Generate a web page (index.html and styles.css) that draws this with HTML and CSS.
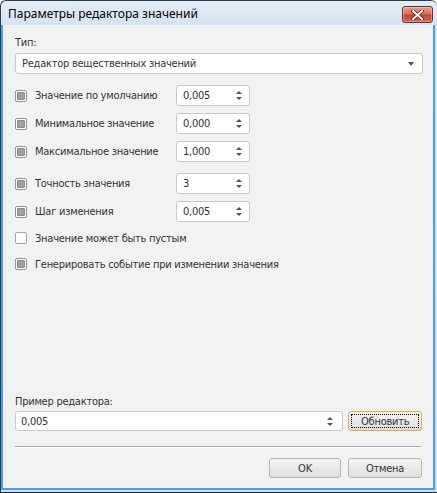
FILE: index.html
```html
<!DOCTYPE html>
<html lang="ru">
<head>
<meta charset="utf-8">
<title>Параметры редактора значений</title>
<link rel="stylesheet" href="styles.css">
</head>
<body>
<div class="window">
  <div class="titlebar">
    <span class="title">Параметры редактора значений</span>
    <span class="close">
      <svg width="13" height="10" viewBox="0 0 13 10"><path d="M2 1 L11 9 M11 1 L2 9" stroke="#5a2020" stroke-width="3.6" stroke-linecap="square"/><path d="M2 1 L11 9 M11 1 L2 9" stroke="#ffffff" stroke-width="2" stroke-linecap="square"/></svg>
    </span>
  </div>
  <div class="client">
    <div class="label type-label">Тип:</div>
    <div class="combo">
      <span>Редактор вещественных значений</span>
      <span class="combo-arrow"></span>
    </div>

    <div class="rows">
      <div class="row">
        <span class="check on"></span><span class="text">Значение по умолчанию</span>
        <div class="spin"><span>0,005</span><span class="arrows"><i class="up"></i><i class="down"></i></span></div>
      </div>
      <div class="row">
        <span class="check on"></span><span class="text">Минимальное значение</span>
        <div class="spin"><span>0,000</span><span class="arrows"><i class="up"></i><i class="down"></i></span></div>
      </div>
      <div class="row">
        <span class="check on"></span><span class="text">Максимальное значение</span>
        <div class="spin"><span>1,000</span><span class="arrows"><i class="up"></i><i class="down"></i></span></div>
      </div>
      <div class="row row-gap">
        <span class="check on"></span><span class="text">Точность значения</span>
        <div class="spin"><span>3</span><span class="arrows"><i class="up"></i><i class="down"></i></span></div>
      </div>
      <div class="row">
        <span class="check on"></span><span class="text">Шаг изменения</span>
        <div class="spin"><span>0,005</span><span class="arrows"><i class="up"></i><i class="down"></i></span></div>
      </div>
      <div class="row row-check">
        <span class="check"></span><span class="text">Значение может быть пустым</span>
      </div>
      <div class="row row-check">
        <span class="check on"></span><span class="text">Генерировать событие при изменении значения</span>
      </div>
    </div>

    <div class="bottom">
      <div class="label">Пример редактора:</div>
      <div class="example">
        <div class="spin wide"><span>0,005</span><span class="arrows"><i class="up"></i><i class="down"></i></span></div>
        <button class="btn focus"><span>Обновить</span></button>
      </div>
      <div class="separator"></div>
      <div class="actions">
        <button class="btn ok"><span>OK</span></button>
        <button class="btn"><span>Отмена</span></button>
      </div>
    </div>
  </div>
</div>
</body>
</html>
```
FILE: styles.css
```css
* { box-sizing: border-box; }
html, body { margin: 0; padding: 0; background: #ffffff; }
body { width: 437px; height: 493px; overflow: hidden; }

.window {
  width: 437px;
  height: 493px;
  border: 1px solid #2f3b48;
  border-right: none;
  border-radius: 6px 6px 0 0;
  background: linear-gradient(#e4edf7, #d5e2f0 26px, #cddcec);
  display: flex;
  flex-direction: column;
  padding: 0 0 2px 0;
  border-bottom: 1px solid #1d2733;
}

.titlebar {
  height: 24px;
  flex: none;
  display: flex;
  align-items: center;
  justify-content: space-between;
  padding: 0 4px 0 7px;
}
.title {
  font-family: "Noto Sans", "Open Sans", sans-serif;
  font-size: 12px;
  color: #000;
  margin-top: 1px;
}
.close {
  width: 31px;
  height: 17px;
  margin-top: 3px;
  border: 1px solid #6b2a26;
  border-radius: 3px;
  background: linear-gradient(#e8a393, #d7705c 45%, #c0442f 55%, #cf6a55);
  display: flex;
  align-items: center;
  justify-content: center;
  box-shadow: inset 0 0 0 1px rgba(255,255,255,0.35);
}

.client {
  flex: 1;
  border-left: 2px solid #49a0e6;
  border-right: 2px solid #49a0e6;
  border-bottom: 2px solid #49a0e6;
  margin-right: 2px;
  background: #f2f2f2;
  font-family: "DejaVu Sans Condensed", "DejaVu Sans", sans-serif;
  font-size: 11px;
  letter-spacing: -0.25px;
  color: #333;
  padding: 11px 11px 10px 12px;
  display: flex;
  flex-direction: column;
}

.label { line-height: 14px; }

.combo {
  margin-top: 3px;
  height: 21px;
  width: 408px;
  background: #fff;
  border: 1px solid #c9c9c9;
  border-radius: 3px;
  display: flex;
  align-items: center;
  justify-content: space-between;
  padding: 0 8px 0 6px;
}
.combo-arrow {
  width: 0; height: 0;
  border-left: 3.5px solid transparent;
  border-right: 3.5px solid transparent;
  border-top: 4px solid #555;
}

.rows {
  margin-top: 11px;
  display: flex;
  flex-direction: column;
  gap: 7px;
}
.row {
  height: 21px;
  display: flex;
  align-items: center;
}
.row-gap { margin-top: 4px; }
.row-check { height: 20px; margin-top: -1px; }

.check {
  width: 12px;
  height: 12px;
  border: 1px solid #a3a3a3;
  border-radius: 2px;
  background: #fff;
  flex: none;
  display: flex;
  align-items: center;
  justify-content: center;
}
.check.on {
  border-color: #8f8f8f;
}
.check.on::after {
  content: "";
  width: 6px;
  height: 6px;
  background: #a0a0a0;
  border: 1px solid #8a8a8a;
  border-radius: 1px;
}
.text {
  margin-left: 8px;
  width: 141px;
  flex: none;
}
.row-check .text { width: auto; }

.spin {
  width: 74px;
  height: 21px;
  background: #fff;
  border: 1px solid #c9c9c9;
  border-radius: 3px;
  display: flex;
  align-items: center;
  justify-content: space-between;
  padding: 0 7px 0 6px;
}
.arrows {
  display: flex;
  flex-direction: column;
  align-items: center;
  gap: 3px;
}
.arrows i {
  display: block;
  width: 0; height: 0;
  border-left: 3px solid transparent;
  border-right: 3px solid transparent;
}
.arrows .up { border-bottom: 3px solid #555; }
.arrows .down { border-top: 3px solid #555; }

.bottom {
  margin-top: auto;
  display: flex;
  flex-direction: column;
}
.example {
  margin-top: 2px;
  display: flex;
  gap: 5px;
}
.spin.wide {
  width: 330px;
  height: 20px;
  padding: 0 9px 0 5px;
}
.btn {
  width: 74px;
  height: 20px;
  margin: 0;
  padding: 0;
  font-family: inherit;
  font-size: 11px;
  letter-spacing: -0.25px;
  color: #333;
  border: 1px solid #b5b5b5;
  border-radius: 3px;
  background: linear-gradient(#f6f6f6, #e9e9e9 50%, #dedede);
  display: flex;
  align-items: center;
  justify-content: center;
}
.btn.focus {
  border-color: #dfae5a;
  padding: 2px;
}
.btn.focus span {
  width: 100%;
  height: 100%;
  border: 1px dotted #000;
  display: flex;
  align-items: center;
  justify-content: center;
}
.separator {
  margin-top: 15px;
  width: 406px;
  height: 2px;
  border-top: 1px solid #a8a8a8;
  border-bottom: 1px solid #fdfdfd;
}
.actions {
  margin-top: 10px;
  display: flex;
  justify-content: flex-end;
  gap: 7px;
}
.actions .btn.ok { width: 72px; }
```
